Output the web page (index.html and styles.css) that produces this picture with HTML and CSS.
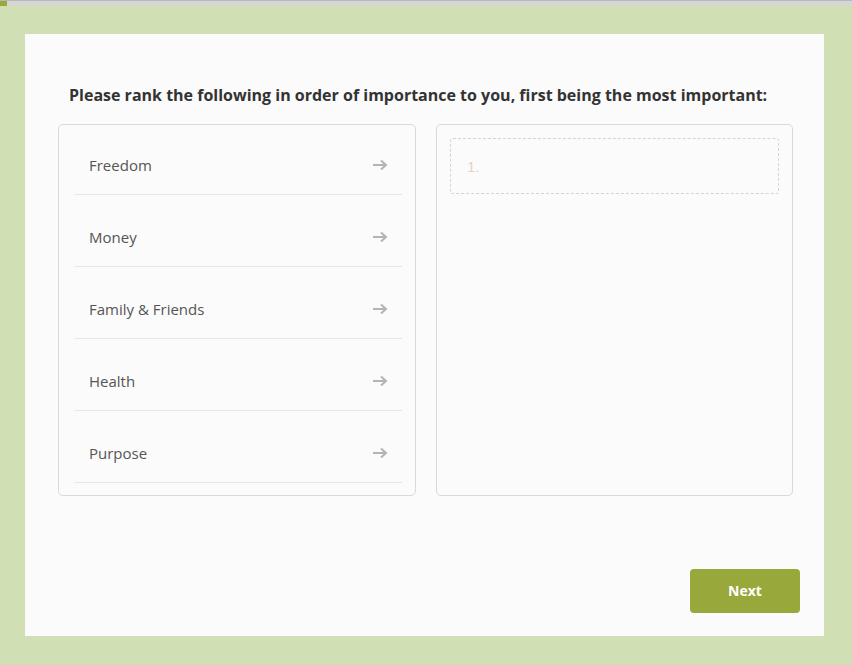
FILE: index.html
```html
<!DOCTYPE html>
<html>
<head>
<meta charset="utf-8">
<link rel="stylesheet" href="styles.css">
</head>
<body>
<div class="topbar"><div class="progress"></div></div>
<div class="page">
  <div class="card">
    <h1 class="question">Please rank the following in order of importance to you, first being the most important:</h1>
    <div class="columns">
      <div class="panel options">
        <div class="item"><span>Freedom</span><svg class="arrow" width="16" height="12" viewBox="0 0 16 12"><path d="M1 6H14M9 1.5L14 6L9 10.5" fill="none" stroke="#b3b3b3" stroke-width="2"/></svg></div>
        <div class="item"><span>Money</span><svg class="arrow" width="16" height="12" viewBox="0 0 16 12"><path d="M1 6H14M9 1.5L14 6L9 10.5" fill="none" stroke="#b3b3b3" stroke-width="2"/></svg></div>
        <div class="item"><span>Family &amp; Friends</span><svg class="arrow" width="16" height="12" viewBox="0 0 16 12"><path d="M1 6H14M9 1.5L14 6L9 10.5" fill="none" stroke="#b3b3b3" stroke-width="2"/></svg></div>
        <div class="item"><span>Health</span><svg class="arrow" width="16" height="12" viewBox="0 0 16 12"><path d="M1 6H14M9 1.5L14 6L9 10.5" fill="none" stroke="#b3b3b3" stroke-width="2"/></svg></div>
        <div class="item"><span>Purpose</span><svg class="arrow" width="16" height="12" viewBox="0 0 16 12"><path d="M1 6H14M9 1.5L14 6L9 10.5" fill="none" stroke="#b3b3b3" stroke-width="2"/></svg></div>
      </div>
      <div class="panel ranking">
        <div class="slot">1.</div>
      </div>
    </div>
    <div class="footer">
      <button class="next">Next</button>
    </div>
  </div>
</div>
</body>
</html>
```
FILE: styles.css
```css
html, body {
  margin: 0;
  padding: 0;
}
body {
  width: 852px;
  height: 665px;
  background: #d0dfb4;
  font-family: "Open Sans", "Liberation Sans", sans-serif;
  overflow: hidden;
}
.topbar {
  height: 5px;
  background: #d6d6d6;
  border-top: 1px solid #b9b9b9;
}
.progress {
  width: 7px;
  height: 5px;
  background: #98a83a;
}
.page {
  padding: 28px 28px 29px 25px;
}
.card {
  background: #fbfbfb;
  height: 602px;
  box-sizing: border-box;
  padding: 47px 31px 0 33px;
  display: flex;
  flex-direction: column;
}
.question {
  margin: 0 0 0 11px;
  font-size: 16px;
  line-height: 28px;
  font-weight: 700;
  color: #333;
}
.columns {
  display: flex;
  gap: 20px;
  margin-top: 15px;
}
.panel {
  border: 1px solid #d9d9d9;
  border-radius: 5px;
  box-sizing: border-box;
  height: 372px;
}
.options {
  width: 358px;
  padding: 0 13px 12px 16px;
}
.ranking {
  width: 357px;
  padding: 13px 13px;
}
.item {
  height: 70px;
  box-sizing: border-box;
  border-bottom: 1px solid #e6e6e6;
  display: flex;
  align-items: center;
  justify-content: space-between;
  padding: 10px 14px 0 14px;
  font-size: 15px;
  color: #555;
}
.item + .item {
  margin-top: 2px;
}
.arrow {
  display: block;
}
.slot {
  height: 56px;
  box-sizing: border-box;
  border: 1px dashed #d4d4d4;
  border-radius: 3px;
  padding: 0 16px;
  display: flex;
  align-items: center;
  font-family: "Liberation Sans", Arial, sans-serif;
  font-size: 15px;
  color: #e6d2c4;
}
.footer {
  display: flex;
  justify-content: flex-end;
  margin-top: 73px;
  margin-right: -7px;
}
.next {
  width: 110px;
  height: 44px;
  border: none;
  border-radius: 4px;
  background: #98a83a;
  color: #fff;
  font-family: "Open Sans", "Liberation Sans", sans-serif;
  font-weight: 700;
  font-size: 14px;
  line-height: 42px;
  padding: 1px 0 1px 0;
  cursor: pointer;
}
```
